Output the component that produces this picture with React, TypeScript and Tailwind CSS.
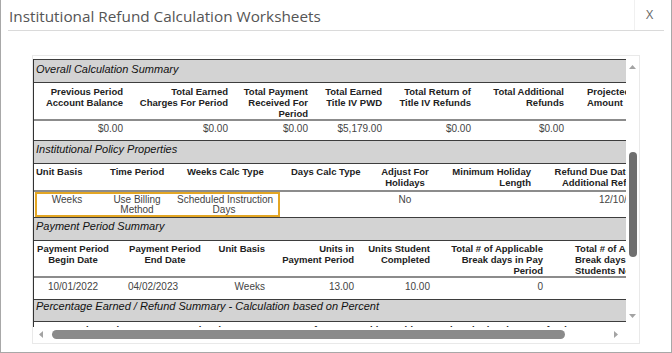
import React from 'react';

type Col = {
  w: string;
  head: string[];
  headCls: string;
  val?: string;
  valCls?: string;
};

const summaryCols: Col[] = [
  { w: 'w-[94px]', head: ['Previous Period', 'Account Balance'], headCls: 'text-right pr-[5px]', val: '$0.00' },
  { w: 'w-[105px]', head: ['Total Earned', 'Charges For Period'], headCls: 'text-right pr-[5px]', val: '$0.00' },
  { w: 'w-[80px]', head: ['Total Payment', 'Received For', 'Period'], headCls: 'text-right pr-[5px]', val: '$0.00' },
  { w: 'w-[74px]', head: ['Total Earned', 'Title IV PWD'], headCls: 'text-right pr-[5px]', val: '$5,179.00' },
  { w: 'w-[89px]', head: ['Total Return of', 'Title IV Refunds'], headCls: 'text-right pr-[5px]', val: '$0.00' },
  { w: 'w-[93px]', head: ['Total Additional', 'Refunds'], headCls: 'text-right pr-[5px]', val: '$0.00' },
  { w: 'w-[150px]', head: ['Projected Refund', 'Amount'], headCls: 'text-left pl-[18px]', val: '' },
];

const policyHead: Col[] = [
  { w: 'w-[66px]', head: ['Unit Basis'], headCls: 'pl-[2px]' },
  { w: 'w-[74px]', head: ['Time Period'], headCls: 'pl-[10px]' },
  { w: 'w-[106px]', head: ['Weeks Calc Type'], headCls: 'pl-[13px]' },
  { w: 'w-[90px]', head: ['Days Calc Type'], headCls: 'pl-[11px]' },
  { w: 'w-[70px]', head: ['Adjust For', 'Holidays'], headCls: 'text-center' },
  { w: 'w-[96px]', head: ['Minimum Holiday', 'Length'], headCls: 'text-right pr-[5px]' },
  { w: 'w-[118px]', head: ['Refund Due Date For', 'Additional Refunds'], headCls: 'text-right pr-[5px]' },
];

const periodCols: Col[] = [
  { w: 'w-[78px]', head: ['Payment Period', 'Begin Date'], headCls: 'text-center', val: '10/01/2022', valCls: 'text-center' },
  { w: 'w-[106px]', head: ['Payment Period', 'End Date'], headCls: 'text-center', val: '04/02/2023', valCls: 'text-left pl-[16px]' },
  { w: 'w-[50px]', head: ['Unit Basis'], headCls: 'text-right pr-[3px]', val: 'Weeks', valCls: 'text-right pr-[3px]' },
  { w: 'w-[91px]', head: ['Units in', 'Payment Period'], headCls: 'text-right pr-[5px]', val: '13.00', valCls: 'text-right pr-[5px]' },
  { w: 'w-[76px]', head: ['Units Student', 'Completed'], headCls: 'text-right pr-[5px]', val: '10.00', valCls: 'text-right pr-[5px]' },
  { w: 'w-[113px]', head: ['Total # of Applicable', 'Break days in Pay', 'Period'], headCls: 'text-right pr-[5px]', val: '0', valCls: 'text-right pr-[5px]' },
  { w: 'w-[160px]', head: ['Total # of Applicable', 'Break days Student', 'Students Not Attended'], headCls: 'text-left pl-[27px]', val: '', valCls: '' },
];

const percentHead = [
  'Total Days in', 'Days Completed', 'Percentage of', 'Title IV Aid', 'Total Institutional', 'Refund Amount',
];

const Band = ({ title, pt }: { title: string; pt: string }) => (
  <div className={`h-full border-y border-[#3d3d3d] bg-[#d3d3d3] pl-[2px] ${pt} text-[11px] leading-[13px] italic text-[#111] whitespace-nowrap`}>
    {title}
  </div>
);

const HeadRow = ({ cols, cls }: { cols: Col[]; cls: string }) => (
  <div className={`flex border-b-2 border-[#8c8c8c] font-bold text-[9.5px] leading-[11px] text-[#222] ${cls}`}>
    {cols.map((c, i) => (
      <div key={i} className={`${c.w} ${c.headCls} shrink-0 whitespace-nowrap`}>
        {c.head.map((l) => (
          <div key={l}>{l}</div>
        ))}
      </div>
    ))}
  </div>
);

const Arrow = ({ dir }: { dir: 'up' | 'down' | 'left' | 'right' }) => {
  const d = {
    up: 'M0 4 L3.5 0 L7 4 Z',
    down: 'M0 0 L3.5 4 L7 0 Z',
    left: 'M4 0 L0 3.5 L4 7 Z',
    right: 'M0 0 L4 3.5 L0 7 Z',
  }[dir];
  const vertical = dir === 'up' || dir === 'down';
  return (
    <svg width={vertical ? 7 : 4} height={vertical ? 4 : 7} className="shrink-0">
      <path d={d} fill="#a3a3a3" />
    </svg>
  );
};

export default function App() {
  return (
    <div className="w-[672px] h-[353px] bg-white border-x border-b border-[#a8a8a8] overflow-hidden font-['Liberation_Sans',Arial,sans-serif]">
      {/* title bar */}
      <div className="mx-[7px] h-[31px] border-b border-[#dadada] flex items-center justify-between">
        <div className="pl-[1px] pt-[3px] font-['Open_Sans',sans-serif] text-[15.3px] text-[#555]">
          Institutional Refund Calculation Worksheets
        </div>
        <div className="w-[30px] h-full pt-[1px] flex items-center justify-center border-l border-[#f0f0f0] font-['Open_Sans',sans-serif] text-[12.5px] text-[#666]">
          X
        </div>
      </div>

      {/* worksheet scroller */}
      <div className="mt-[24px] ml-[31px] w-[608px] h-[289px] border border-[#e9e9e9] pt-[3px]">
        <div className="flex h-[268px]">
          <div className="w-[593px] shrink-0 overflow-hidden border-l border-[#333]">
            <div className="w-[780px] flex flex-col">
              <div className="h-[24px]">
                <Band title="Overall Calculation Summary" pt="pt-[3px]" />
              </div>
              <HeadRow cols={summaryCols} cls="h-[38px] pt-[3px]" />
              <div className="flex h-[19px] pt-[2px] text-[10px] leading-[12px] text-[#444] whitespace-nowrap">
                {summaryCols.map((c, i) => (
                  <div key={i} className={`${c.w} shrink-0 text-right pr-[5px]`}>{c.val}</div>
                ))}
              </div>

              <div className="h-[24px]">
                <Band title="Institutional Policy Properties" pt="pt-[2px]" />
              </div>
              <HeadRow cols={policyHead} cls="h-[28px] pt-[2px]" />
              <div className="flex h-[25px] text-[10px] leading-[10px] text-[#444] whitespace-nowrap">
                <div className="ml-[1px] w-[245px] shrink-0 flex h-[25px] border-2 border-[#e3a624] pt-[1px]">
                  <div className="w-[60px] shrink-0 text-center">Weeks</div>
                  <div className="w-[80px] shrink-0 text-center">Use Billing<br />Method</div>
                  <div className="w-[94px] shrink-0 text-center">Scheduled Instruction<br />Days</div>
                </div>
                <div className="w-[90px] shrink-0" />
                <div className="w-[70px] shrink-0 pt-[3px] text-center">No</div>
                <div className="w-[96px] shrink-0" />
                <div className="w-[118px] shrink-0 pt-[3px] pr-[5px] text-right">12/10/2022</div>
              </div>

              <div className="h-[24px]">
                <Band title="Payment Period Summary" pt="pt-[2px]" />
              </div>
              <HeadRow cols={periodCols} cls="h-[37px] pt-[2px]" />
              <div className="flex h-[21px] pt-[3px] text-[10px] leading-[12px] text-[#444] whitespace-nowrap">
                {periodCols.map((c, i) => (
                  <div key={i} className={`${c.w} ${c.valCls} shrink-0`}>{c.val}</div>
                ))}
              </div>

              <div className="h-[23px]">
                <Band title="Percentage Earned / Refund Summary - Calculation based on Percent" pt="pt-0" />
              </div>
              <div className="flex pt-[2px] font-bold text-[9.5px] leading-[11px] text-[#222]">
                {percentHead.map((h) => (
                  <div key={h} className="w-[96px] shrink-0 pr-[5px] text-right">{h}</div>
                ))}
              </div>
            </div>
          </div>

          {/* vertical scrollbar */}
          <div className="w-[13px] shrink-0 flex flex-col items-center">
            <div className="mt-[6px]"><Arrow dir="up" /></div>
            <div className="mt-[83px] w-[8px] h-[105px] rounded-full bg-[#6f6f6f]" />
            <div className="flex-1" />
            <div className="mb-[9px]"><Arrow dir="down" /></div>
          </div>
        </div>

        {/* horizontal scrollbar */}
        <div className="h-[15px] flex items-center pl-[6px]">
          <Arrow dir="left" />
          <div className="ml-[9px] w-[513px] h-[9px] rounded-full bg-[#8a8a8a]" />
          <div className="ml-[49px]"><Arrow dir="right" /></div>
        </div>
      </div>
    </div>
  );
}
